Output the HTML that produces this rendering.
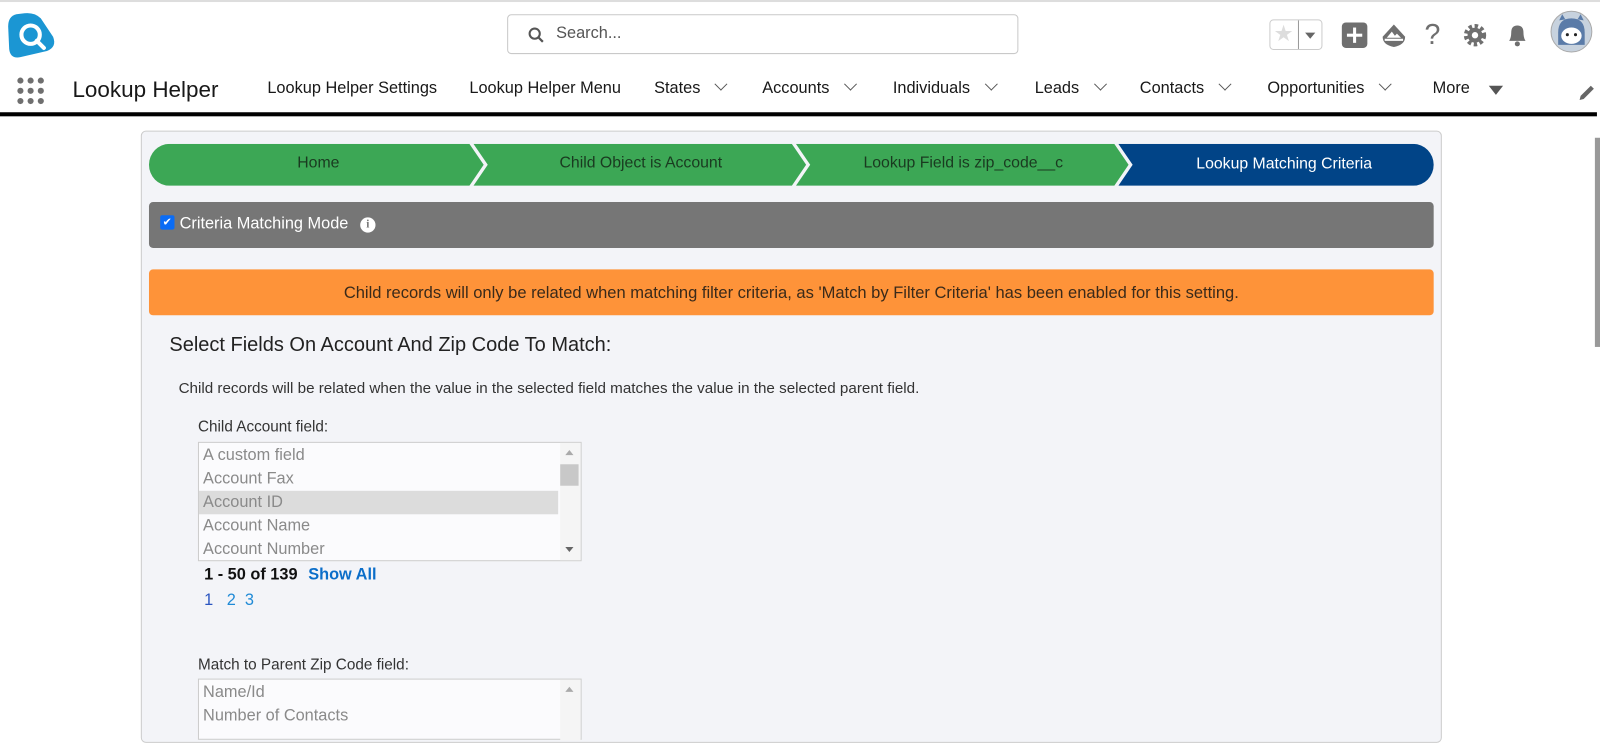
<!DOCTYPE html>
<html><head><meta charset="utf-8"><style>
*{margin:0;padding:0;box-sizing:border-box}
body{width:1600px;height:716px;overflow:hidden;background:#fff;font-family:"Liberation Sans",sans-serif;position:relative;color:#181818}
#w{position:absolute;left:0;top:0;width:1568px;height:702px;transform:scale(1.020408);transform-origin:0 0}
.a{position:absolute;white-space:nowrap}
.nav{font-size:16px;color:#181818;top:78px}
.chev{display:inline-block;width:9px;height:9px;border-right:1.5px solid #555;border-bottom:1.5px solid #555;transform:rotate(45deg);margin-left:16px;position:relative;top:-4px}
.opt{height:23px;line-height:23px;padding-left:4px;color:#8a8a8a;font-size:16px}
.bc{font-size:15.5px;text-align:center}
</style></head><body><div id="w">
<div class="a" style="left:0;top:0;width:1568px;height:2px;background:#ddd"></div>
<svg class="a" style="left:6px;top:12px" width="50" height="46" viewBox="0 0 50 46"><path d="M10 2 Q2 4 2 14 L3 36 Q4 46 14 44 L40 38 Q50 34 46 24 L34 6 Q28 0 18 1 Z" fill="#1b96d3"/><circle cx="24" cy="22" r="9" fill="none" stroke="#fff" stroke-width="4"/><path d="M30 28 L37 35" stroke="#fff" stroke-width="4" stroke-linecap="round"/></svg>
<div class="a" style="left:497px;top:14px;width:501px;height:39px;border:1px solid #c9c9c9;border-radius:4px"></div>
<svg class="a" style="left:517px;top:26px" width="17" height="17" viewBox="0 0 17 17"><circle cx="7" cy="7" r="5" fill="none" stroke="#555" stroke-width="2"/><path d="M11 11 L15 15" stroke="#555" stroke-width="2.2"/></svg>
<div class="a" style="left:545px;top:24px;font-size:16px;color:#555">Search...</div>
<div class="a" style="left:1244px;top:19px;width:52px;height:30px;border:1px solid #ccc;border-radius:4px"></div>
<div class="a" style="left:1248px;top:20px;font-size:22px;color:#ddd">★</div>
<div class="a" style="left:1272px;top:20px;width:1px;height:28px;background:#999"></div>
<div class="a" style="left:1279px;top:32px;border-left:5px solid transparent;border-right:5px solid transparent;border-top:6px solid #666"></div>
<div class="a" style="left:1315px;top:22px;width:25px;height:25px;background:#6f6f6f;border-radius:4px"></div>
<div class="a" style="left:1320px;top:33px;width:15px;height:3px;background:#fff"></div>
<div class="a" style="left:1326px;top:27px;width:3px;height:15px;background:#fff"></div>
<svg class="a" style="left:1353px;top:22px" width="26" height="26" viewBox="0 0 26 26"><path d="M13 2 L24 14 Q24 22 13 24 Q2 22 2 14 Z" fill="#6f6f6f"/><path d="M6 15 L11 9 L14 13 L16 11 L20 15 Z" fill="#fff"/><path d="M4 17 L22 17" stroke="#fff" stroke-width="2"/></svg>
<div class="a" style="left:1396px;top:18px;font-size:28px;color:#6f6f6f">?</div>
<svg class="a" style="left:1433px;top:22px" width="25" height="25" viewBox="0 0 24 24"><circle cx="12" cy="12" r="8" fill="none" stroke="#6f6f6f" stroke-width="5" stroke-dasharray="3 2.3"/><circle cx="12" cy="12" r="7" fill="#6f6f6f"/><circle cx="12" cy="12" r="3" fill="#fff"/></svg>
<svg class="a" style="left:1475px;top:22px" width="24" height="25" viewBox="0 0 24 25"><path d="M4 18 Q6 15 6 10 Q6 3 12 3 Q18 3 18 10 Q18 15 20 18 Z" fill="#6f6f6f"/><circle cx="12" cy="21" r="2.5" fill="#6f6f6f"/></svg>
<svg class="a" style="left:1519px;top:10px" width="42" height="42" viewBox="0 0 42 42"><circle cx="21" cy="21" r="20" fill="#c7d2de" stroke="#aaa"/><path d="M8 22 Q8 8 21 8 Q34 8 34 22 L34 34 L8 34 Z" fill="#5a7ba8"/><ellipse cx="21" cy="25" rx="10" ry="8" fill="#fff"/><circle cx="17" cy="24" r="1.5" fill="#222"/><circle cx="25" cy="24" r="1.5" fill="#222"/><path d="M9 10 L12 4 L15 9 M27 9 L30 4 L33 10" fill="#5a7ba8"/></svg>
<svg class="a" style="left:16px;top:75px" width="28" height="28" viewBox="0 0 28 28" fill="#6f6f6f"><circle cx="4" cy="4" r="3"/><circle cx="14" cy="4" r="3"/><circle cx="24" cy="4" r="3"/><circle cx="4" cy="14" r="3"/><circle cx="14" cy="14" r="3"/><circle cx="24" cy="14" r="3"/><circle cx="4" cy="24" r="3"/><circle cx="14" cy="24" r="3"/><circle cx="24" cy="24" r="3"/></svg>
<div class="a" style="left:71px;top:75px;font-size:22px">Lookup Helper</div>
<div class="a nav" style="left:262px">Lookup Helper Settings</div>
<div class="a nav" style="left:460px">Lookup Helper Menu</div>
<div class="a nav" style="left:641px">States<span class="chev"></span></div>
<div class="a nav" style="left:747px">Accounts<span class="chev"></span></div>
<div class="a nav" style="left:875px">Individuals<span class="chev"></span></div>
<div class="a nav" style="left:1014px">Leads<span class="chev"></span></div>
<div class="a nav" style="left:1117px">Contacts<span class="chev"></span></div>
<div class="a nav" style="left:1242px">Opportunities<span class="chev"></span></div>
<div class="a nav" style="left:1404px">More</div>
<div class="a" style="left:1459px;top:84px;border-left:7px solid transparent;border-right:7px solid transparent;border-top:9px solid #555"></div>
<svg class="a" style="left:1546px;top:82px" width="18" height="18" viewBox="0 0 18 18"><path d="M2 16 L3 12 L13 2 L16 5 L6 15 Z" fill="#666"/></svg>
<div class="a" style="left:0;top:110px;width:1565px;height:4px;background:#000"></div>
<div class="a" style="left:1563px;top:135px;width:6px;height:205px;background:#999"></div>
<div class="a" style="left:138px;top:128px;width:1275px;height:600px;background:#f3f4f8;border:1px solid #ccc;border-radius:5px"></div>
<svg class="a" style="left:146px;top:141px" width="1260" height="41" viewBox="0 0 1260 41">
<path d="M20 0 H314 L328 20.5 L314 41 H20 A20 20.5 0 0 1 20 0 Z" fill="#3ca755"/>
<path d="M318 0 H630 L644 20.5 L630 41 H318 L332 20.5 Z" fill="#3ca755"/>
<path d="M634 0 H946 L960 20.5 L946 41 H634 L648 20.5 Z" fill="#3ca755"/>
<path d="M950 0 H1239 A20 20.5 0 0 1 1239 41 H950 L964 20.5 Z" fill="#014487"/>
</svg>
<div class="a bc" style="left:146px;top:151px;width:332px;color:#1a3a20">Home</div>
<div class="a bc" style="left:464px;top:151px;width:328px;color:#1a3a20">Child Object is Account</div>
<div class="a bc" style="left:780px;top:151px;width:328px;color:#1a3a20">Lookup Field is zip_code__c</div>
<div class="a bc" style="left:1096px;top:152px;width:325px;color:#fff">Lookup Matching Criteria</div>
<div class="a" style="left:146px;top:198px;width:1259px;height:45px;background:#767676;border-radius:4px"></div>
<div class="a" style="left:157px;top:211px;width:14px;height:14px;background:#0a6cf5;border-radius:2px;color:#fff;font-size:11px;line-height:14px;text-align:center">✔</div>
<div class="a" style="left:176px;top:211px;font-size:16px;color:#fff">Criteria Matching Mode</div>
<div class="a" style="left:353px;top:213px;width:15px;height:15px;border-radius:50%;background:#fff;color:#767676;font-size:11px;font-weight:bold;text-align:center;line-height:15px;font-family:'Liberation Serif',serif">i</div>
<div class="a" style="left:146px;top:264px;width:1259px;height:45px;background:#fe9339;border-radius:4px"></div>
<div class="a" style="left:146px;top:278px;width:1259px;text-align:center;font-size:16.2px;color:#3a2a1a">Child records will only be related when matching filter criteria, as 'Match by Filter Criteria' has been enabled for this setting.</div>
<div class="a" style="left:166px;top:327px;font-size:19.6px;color:#222">Select Fields On Account And Zip Code To Match:</div>
<div class="a" style="left:175px;top:373px;font-size:14.9px;color:#333">Child records will be related when the value in the selected field matches the value in the selected parent field.</div>
<div class="a" style="left:194px;top:410px;font-size:15px;color:#333">Child Account field:</div>
<div class="a" style="left:194px;top:433px;width:376px;height:117px;border:1px solid #ccc;background:#fbfbfd;padding-top:1px">
<div class="opt">A custom field</div><div class="opt">Account Fax</div><div class="opt" style="background:#dcdcdc;margin-right:22px">Account ID</div><div class="opt">Account Name</div><div class="opt">Account Number</div>
</div>
<div class="a" style="left:549px;top:434px;width:20px;height:115px;background:#f5f5f5"></div>
<div class="a" style="left:549px;top:455px;width:18px;height:21px;background:#c8c8c8"></div>
<div class="a" style="left:554px;top:441px;border-left:4px solid transparent;border-right:4px solid transparent;border-bottom:5px solid #aaa"></div>
<div class="a" style="left:554px;top:536px;border-left:4px solid transparent;border-right:4px solid transparent;border-top:5px solid #666"></div>
<div class="a" style="left:200px;top:555px;font-size:16px;font-weight:bold;color:#111">1 - 50 of 139 <span style="color:#0b6ec9;margin-left:6px">Show All</span></div>
<div class="a" style="left:200px;top:580px;font-size:16px;color:#2a55c0">1 &nbsp; <span style="color:#1f8ad6">2</span> &nbsp;<span style="color:#1f8ad6">3</span></div>
<div class="a" style="left:194px;top:643px;font-size:15px;color:#333">Match to Parent Zip Code field:</div>
<div class="a" style="left:194px;top:665px;width:376px;height:60px;border:1px solid #ccc;background:#fbfbfd;padding-top:1px">
<div class="opt">Name/Id</div><div class="opt">Number of Contacts</div>
</div>
<div class="a" style="left:549px;top:666px;width:20px;height:60px;background:#f5f5f5"></div>
<div class="a" style="left:554px;top:673px;border-left:4px solid transparent;border-right:4px solid transparent;border-bottom:5px solid #aaa"></div>
</div></body></html>
